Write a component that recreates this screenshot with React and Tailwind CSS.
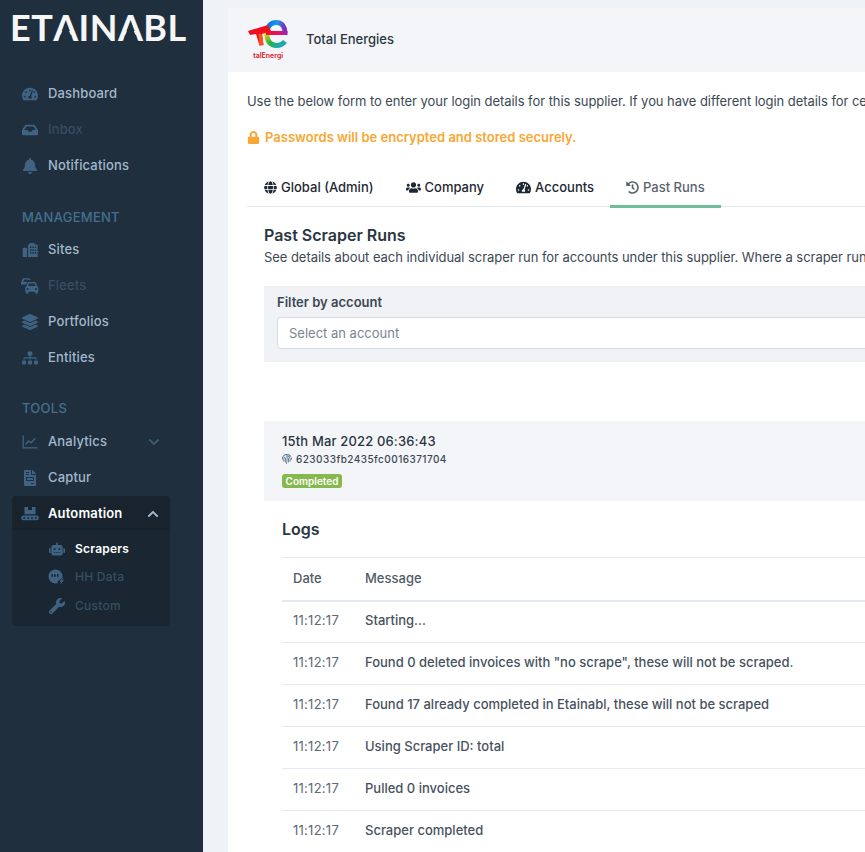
import React from "react";
import { FaTachometerAlt, FaInbox, FaBell, FaLayerGroup, FaSitemap, FaFileInvoice, FaRobot, FaWrench, FaGlobe, FaUsers, FaHistory, FaLock, FaFingerprint, FaChevronDown, FaChevronUp } from "react-icons/fa";

const City = () => (
  <svg viewBox="0 0 16 16" className="w-4 h-4" fill="currentColor">
    <path fillRule="evenodd" d="M6 2.5h1.5V1h5v1.5H15c.4 0 .7.3.7.7V15H6zM8 4.5v1.6h1.4V4.5zm2.4 0v1.6h1.4V4.5zm2.4 0v1.6h1.4V4.5zM8 7.3v1.6h1.4V7.3zm2.4 0v1.6h1.4V7.3zm2.4 0v1.6h1.4V7.3zM8 10.1v1.6h1.4v-1.6zm2.4 0v1.6h1.4v-1.6zm2.4 0v1.6h1.4v-1.6z" />
    <path d="M.7 6.5C.7 6 1 5.8 1.4 5.8H5V15H.7z" />
  </svg>
);
const Cars = () => (
  <svg viewBox="0 0 18 16" className="w-[18px] h-4" fill="currentColor">
    <path d="M0 6.4V4.6L1.2 1.4C1.5.6 2.2.2 3 .2h4.2c.8 0 1.5.4 1.8 1l.5 1H8L7.4 1.6H3.2L2.3 3.8h4.2L5 6.6 0 6.4z" />
    <path fillRule="evenodd" d="M5.4 8.2l1-3C6.7 4.4 7.4 4 8.2 4h5.2c.8 0 1.5.4 1.8 1.2l1 3c.7.3 1.2 1 1.2 1.8v3.8h-.6V15c0 .4-.3.8-.8.8h-1c-.4 0-.8-.4-.8-.8v-1.2H7.4V15c0 .4-.3.8-.8.8h-1c-.4 0-.8-.4-.8-.8v-1.2h-.6V10c0-.8.5-1.5 1.2-1.8zM7.2 8h7.2l-.8-2.4H8L7.2 8zm-.6 2a1 1 0 1 0 0 2 1 1 0 0 0 0-2zm8.4 0a1 1 0 1 0 0 2 1 1 0 0 0 0-2z" />
  </svg>
);
const Conveyor = () => (
  <svg viewBox="0 0 18 16" className="w-[18px] h-4" fill="currentColor">
    <path d="M3.5 1H7v3h4V1h3.5v7.2h-11z" />
    <path d="M2.5 9.5h13a2.4 2.4 0 0 1 0 4.8h-13a2.4 2.4 0 0 1 0-4.8z" />
    <g fill="#1a2732"><circle cx="3.2" cy="11.9" r="1" /><circle cx="7.2" cy="11.9" r="1" /><circle cx="11" cy="11.9" r="1" /><circle cx="14.8" cy="11.9" r="1" /></g>
  </svg>
);
const HHData = () => (
  <svg viewBox="0 0 18 16" className="w-[18px] h-4" fill="currentColor">
    <circle cx="7.5" cy="7.5" r="7" />
    <g fill="#1a2732"><rect x="3.4" y="5.2" width="1.6" height="2.6" /><rect x="6.2" y="5.2" width="1.6" height="2.6" /><rect x="9" y="5.2" width="1.6" height="2.6" /><path d="M16 7.5L9.5 12.5l1 3.5h3l4-7z" /></g>
    <path d="M14.8 8.4l-3.4 4h1.8l-1 3.2 3.8-4.4h-1.9l1.4-2.8z" />
  </svg>
);
const ChartLine = () => (
  <svg viewBox="0 0 16 16" className="w-4 h-4" fill="none" stroke="currentColor" strokeWidth="1.3">
    <path d="M1.2 1.5V13.8H15.5" />
    <path d="M3.5 10.5L6.5 7L9 8.8L13.5 4.2" />
  </svg>
);

const Row = ({ icon, label, dim, chevron }) => (
  <div className="flex items-center h-9 pl-[21px] pr-[43px]">
    <span className="w-[18px] flex justify-center text-[#3f6483] text-[16px]">{icon}</span>
    <span className={`ml-[9px] text-[13px] font-medium tracking-[0.012em] flex-1 ${dim ? "text-[#364e63]" : "text-[#a3b8cb]"}`}>{label}</span>
    {chevron}
  </div>
);
const Sub = ({ icon, label, dim }) => (
  <div className="flex items-center h-[28.5px] pl-[48px]">
    <span className="w-[18px] flex justify-center text-[#3f6483] text-[16px]">{icon}</span>
    <span className={`ml-[9px] text-xs tracking-[0.02em] ${dim ? "text-[#364e63] font-medium" : "text-white font-semibold"}`}>{label}</span>
  </div>
);
const Section = ({ children }) => (
  <div className="pl-[22px] text-[13px] font-medium leading-4 tracking-[0.02em] text-[#44708f]">{children}</div>
);

const LogoA = () => (
  <span className="relative inline-block">
    A
    <span className="absolute bottom-[7px] h-[17px] left-[6px] w-[13px] bg-[#1f2f3e] [clip-path:polygon(50%_0,100%_100%,0_100%)]" />
  </span>
);

const TotalLogo = () => (
  <div className="w-10 flex flex-col items-center">
    <svg viewBox="0 0 40 30" className="w-10 h-[30px]">
      <defs>
        <linearGradient id="eg1" x1="0" y1="0" x2="1" y2="0.2"><stop offset="0" stopColor="#0a6be0" /><stop offset="0.55" stopColor="#1a9be8" /><stop offset="1" stopColor="#7a2fc0" /></linearGradient>
        <linearGradient id="eg2" x1="0" y1="0" x2="1" y2="1"><stop offset="0" stopColor="#ffcf00" /><stop offset="0.5" stopColor="#25b04a" /><stop offset="1" stopColor="#19a6d8" /></linearGradient>
        <linearGradient id="eg3" x1="0" y1="0" x2="1" y2="0"><stop offset="0" stopColor="#f01020" /><stop offset="0.7" stopColor="#e0107a" /><stop offset="1" stopColor="#8a2dc0" /></linearGradient>
      </defs>
      <path d="M19 13C19 6 23 2.5 28.5 2.5C34 2.5 37 7 37 13" fill="none" stroke="url(#eg1)" strokeWidth="5" />
      <path d="M19 12C18 20 22 25.5 28.5 25.5C32 25.5 35 24 37 21.5" fill="none" stroke="url(#eg2)" strokeWidth="5" />
      <path d="M18 11H39.5V15H18z" fill="url(#eg3)" />
      <path d="M0 11L20 5L23 11L14 14L15.5 25L11.5 25.5L8 14L2 15z" fill="#ee0f1c" />
      <path d="M10.5 14L14 14L15.5 25L11.5 25.5z" fill="#f5531a" />
    </svg>
    <div className="w-[30px] mt-px h-[9px] overflow-hidden flex justify-center text-[7px] leading-[9px] font-semibold text-[#e3142b] whitespace-nowrap">TotalEnergies</div>
  </div>
);

const Tab = ({ icon, label, active }) => (
  <div className={`h-10 shrink-0 px-4 pt-[2px] flex items-center gap-[4px] text-[13px] font-medium border-b-[3px] ${active ? "border-[#6fbf9b] text-[#5a6470]" : "border-transparent text-[#1d2833]"}`}>
    <span className="text-[13px]">{icon}</span>
    {label}
  </div>
);

const logs = [
  "Starting...",
  'Found 0 deleted invoices with "no scrape", these will not be scraped.',
  "Found 17 already completed in Etainabl, these will not be scraped",
  "Using Scraper ID: total",
  "Pulled 0 invoices",
  "Scraper completed",
];

export default function App() {
  return (
    <div className="w-[865px] h-[852px] overflow-hidden flex bg-[#eff2f7] font-['Inter','Liberation_Sans',sans-serif]">
      <aside className="w-[203px] shrink-0 bg-[#1f2f3e]">
        <div className="h-[76px] pt-[8px] pl-[10px] text-[36px] leading-[38px] font-['Lato','Liberation_Sans',sans-serif] font-bold text-[#f6f6f6] tracking-[0.012em] whitespace-nowrap">ET<LogoA />IN<LogoA />BL</div>
        <Row icon={<FaTachometerAlt />} label="Dashboard" />
        <Row icon={<FaInbox />} label="Inbox" dim />
        <Row icon={<FaBell />} label="Notifications" />
        <div className="h-[25px]" />
        <Section>MANAGEMENT</Section>
        <div className="h-[7px]" />
        <Row icon={<City />} label="Sites" />
        <Row icon={<Cars />} label="Fleets" dim />
        <Row icon={<FaLayerGroup />} label="Portfolios" />
        <Row icon={<FaSitemap />} label="Entities" />
        <div className="h-[24px]" />
        <Section>TOOLS</Section>
        <div className="h-[8px]" />
        <Row icon={<ChartLine />} label="Analytics" chevron={<FaChevronDown className="text-[#3f5a70] text-[12px]" />} />
        <Row icon={<FaFileInvoice />} label="Captur" />
        <div className="ml-3 w-[158px] h-[130px] rounded bg-[#1a2732]">
          <div className="flex items-center h-[34px] pt-[2px] pl-[9px] pr-[11px] bg-[#18232d] rounded-t">
            <span className="w-[18px] flex justify-center text-[#3f6483]"><Conveyor /></span>
            <span className="ml-[9px] text-[13px] font-semibold tracking-[0.012em] text-white flex-1">Automation</span>
            <FaChevronUp className="text-[#a3b8cb] text-[12px]" />
          </div>
          <div className="pt-[5px] -ml-3">
            <Sub icon={<FaRobot />} label="Scrapers" />
            <div className="-mt-px"><Sub icon={<HHData />} label="HH Data" dim /></div>
            <div className="mt-[1px]"><Sub icon={<FaWrench />} label="Custom" dim /></div>
          </div>
        </div>
      </aside>

      <main className="pl-[25px] pt-2 shrink-0">
        <div className="w-[900px] bg-white rounded-t min-h-[900px]">
          <div className="h-16 bg-[#f3f5f9] rounded-t flex items-center pl-5">
            <TotalLogo />
            <div className="ml-[18px] text-[13px] font-medium text-[#2b3642]">Total Energies</div>
          </div>
          <div className="pl-[19px]">
            <p className="pt-[20px] text-[13px] leading-[18px] tracking-[-0.05px] text-[#3c4854] whitespace-nowrap">Use the below form to enter your login details for this supplier. If you have different login details for certain accounts</p>
            <p className="mt-[18px] flex items-center gap-[5px] text-[13px] leading-[18px] font-semibold text-[#f7a733]"><FaLock className="text-[13px]" />Passwords will be encrypted and stored securely.</p>
            <div className="mt-[22px] flex pl-px border-b border-[#e3e8f2] h-[39px]">
              <Tab icon={<FaGlobe />} label="Global (Admin)" />
              <Tab icon={<FaUsers className="text-[15px]" />} label="Company" />
              <Tab icon={<FaTachometerAlt className="text-[15px]" />} label="Accounts" />
              <Tab icon={<FaHistory />} label="Past Runs" active />
            </div>
            <div className="pl-[17px]">
              <h3 className="mt-[17px] text-[16px] leading-[22px] font-semibold text-[#2b3642]">Past Scraper Runs</h3>
              <p className="mt-[2px] text-[13px] leading-[18px] tracking-[-0.05px] text-[#3c4854] whitespace-nowrap">See details about each individual scraper run for accounts under this supplier. Where a scraper run has failed</p>
              <div className="mt-[20px] h-[76px] bg-[#f0f2f6] pl-[13px] pt-[7px]">
                <div className="text-[13px] leading-[18px] font-semibold text-[#3c4854]">Filter by account</div>
                <div className="mt-[6px] h-8 bg-white border border-[#d5dbe6] rounded flex items-center pt-[2px] pl-[11px] text-[13px] text-[#7a8591]">Select an account</div>
              </div>
              <div className="mt-[59px] h-[80px] bg-[#f3f5f9] pl-[18px] pt-[11px]">
                <div className="text-[13px] leading-[18px] font-medium tracking-[0.012em] text-[#2b3642]">15th Mar 2022 06:36:43</div>
                <div className="flex items-center gap-[4px] text-[10px] leading-[18px] font-medium tracking-[0.045em] text-[#3c4854]"><FaFingerprint className="text-[10px] text-[#5f7b8e]" />623033fb2435fc0016371704</div>
                <span className="mt-[6px] inline-block h-[14px] w-[60px] text-center rounded-[3px] bg-[#86b94c] text-[10px] leading-[14px] font-semibold text-white align-top">Completed</span>
              </div>
              <div className="pl-[18px]">
                <h4 className="mt-[16px] text-[16px] leading-[24px] font-semibold text-[#2b3642]">Logs</h4>
                <table className="mt-[16px] w-full border-collapse text-[13px]">
                  <thead>
                    <tr className="h-[43px] border-t border-b-2 border-[#e3e8f2] text-[#515c68]">
                      <th className="w-[83px] pl-[11px] text-left font-medium">Date</th>
                      <th className="text-left font-medium">Message</th>
                    </tr>
                  </thead>
                  <tbody>
                    {logs.map((m) => (
                      <tr key={m} className="h-[42px] border-b border-[#e3e8f2]">
                        <td className="pl-[11px] pb-[2px] tracking-[0.02em] text-[#5d6875]">11:12:17</td>
                        <td className="pb-[2px] font-medium text-[#47525e]">{m}</td>
                      </tr>
                    ))}
                  </tbody>
                </table>
              </div>
            </div>
          </div>
        </div>
      </main>
    </div>
  );
}
